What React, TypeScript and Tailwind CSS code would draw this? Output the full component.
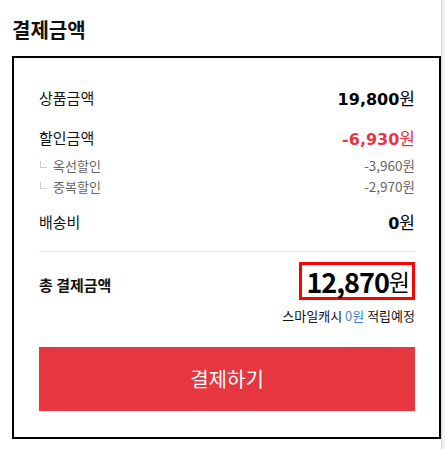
const font = { fontFamily: '"Noto Sans CJK KR", "Noto Sans", sans-serif' };
const num = { fontFamily: '"DejaVu Sans", "Noto Sans CJK KR", sans-serif' };

function Row({ label, amount, red }: { label: string; amount: string; red?: boolean }) {
  return (
    <div className="flex items-center justify-between h-[24px]">
      <span className="text-[15px] text-[#111]">{label}</span>
      <span className={`flex items-baseline ${red ? 'text-[#e63741]' : 'text-black'}`}>
        <b className="text-[16px] font-bold" style={num}>{amount}</b>
        <span className="text-[17px] font-normal">원</span>
      </span>
    </div>
  );
}

function SubRow({ label, amount }: { label: string; amount: string }) {
  return (
    <div className="flex items-center justify-between h-[21px] text-[13.5px] text-[#666]">
      <span className="flex items-center">
        <span className="w-[7px] h-[7px] border-l border-b border-[#ccc] ml-[1px] mr-[6px] mb-[3px]" />
        <span className="text-[13px]">{label}</span>
      </span>
      <span>{amount}원</span>
    </div>
  );
}

export default function App() {
  return (
    <div className="flex w-[445px] h-[449px] bg-white overflow-hidden" style={font}>
      <div className="w-[441px] pl-[12px]">
        <h1 className="mt-[15px] h-[30px] leading-[30px] text-[20px] font-bold text-[#111]">결제금액</h1>
        <div className="mt-[11px] w-[429px] h-[383px] border-2 border-black pl-[25px] pr-[24px] pt-[28px] flex flex-col">
          <Row label="상품금액" amount="19,800" />
          <div className="mt-[16px]">
            <Row label="할인금액" amount="-6,930" red />
          </div>
          <div className="mt-[5px]">
            <SubRow label="옥선할인" amount="-3,960" />
            <SubRow label="중복할인" amount="-2,970" />
          </div>
          <div className="mt-[13px]">
            <Row label="배송비" amount="0" />
          </div>
          <div className="mt-[17px] h-px bg-[#e5e5e5]" />
          <div className="mt-[10px] flex items-center justify-between">
            <span className="text-[15px] font-bold text-[#111] mt-[8px]">총 결제금액</span>
            <div className="h-[38px] border-[3px] border-[#ff0000] pl-[4px] pr-[2px] flex items-center text-black">
              <b className="text-[27px] font-bold leading-none tracking-[-1px]">12,870</b>
              <span className="text-[23px] font-normal leading-none">원</span>
            </div>
          </div>
          <div className="mt-[7px] h-[18px] leading-[18px] text-right text-[13px] text-[#111]">
            스마일캐시 <span className="text-[#3f88d8]">0원</span> 적립예정
          </div>
          <button className="mt-[22px] h-[64px] w-full bg-[#e63741] text-white text-[20px]">결제하기</button>
        </div>
      </div>
      <div className="w-[4px] h-full border-l border-[#d6d6d6] bg-[#f1f1f1]" />
    </div>
  );
}
